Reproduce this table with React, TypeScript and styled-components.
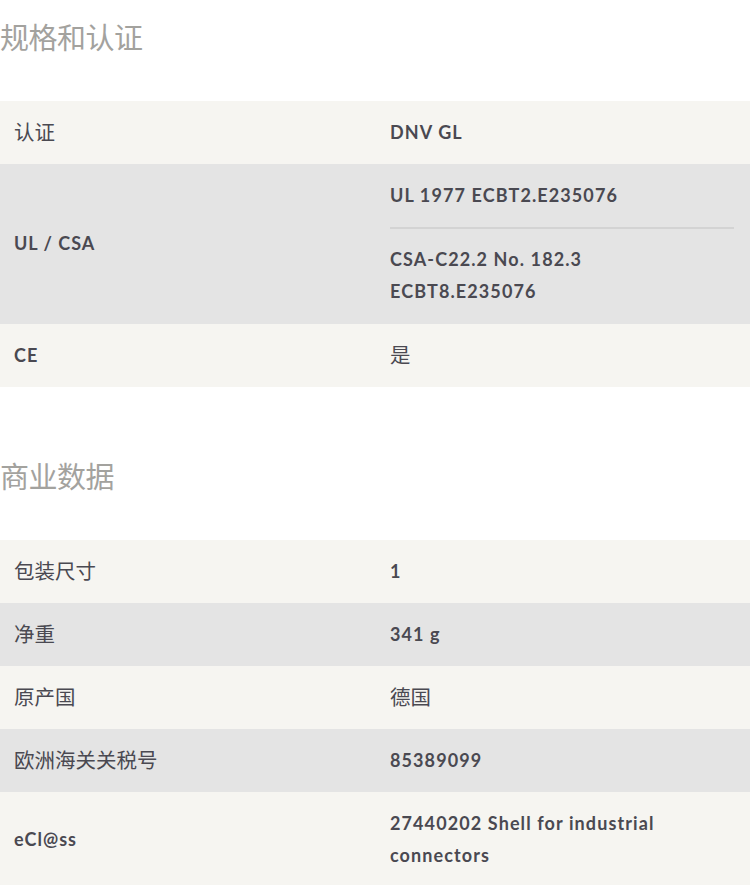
import React from "react";
import styled, { createGlobalStyle } from "styled-components";

const Global = createGlobalStyle`
  html, body { margin: 0; padding: 0; background: #ffffff; }
  body { font-family: Lato, "Noto Sans CJK SC", sans-serif; overflow: hidden; }
`;

const Page = styled.div`
  width: 750px;
  display: flex;
  flex-direction: column;
`;

const Section = styled.section`
  display: flex;
  flex-direction: column;
  margin-bottom: 52px;
  &:last-child {
    margin-bottom: 0;
  }
`;

const Heading = styled.h2`
  margin: 0 0 46px 0;
  padding-top: 17px;
  font-family: "Noto Sans CJK SC", sans-serif;
  font-weight: 400;
  font-size: 29px;
  line-height: 38px;
  color: #a3a29e;
  letter-spacing: -0.5px;
`;

const Table = styled.div`
  display: flex;
  flex-direction: column;
`;

const Row = styled.div<{ $alt: boolean }>`
  display: grid;
  grid-template-columns: 376px 374px;
  background: ${(p) => (p.$alt ? "#e4e4e4" : "#f6f5f1")};
  color: #4a4951;
`;

const Label = styled.div<{ $cjk?: boolean }>`
  display: flex;
  align-items: center;
  padding: ${(p) => (p.$cjk ? "13.5px 14px 17.5px" : "14.5px 14px 16.5px")};
  font-family: ${(p) => (p.$cjk ? '"Noto Sans CJK SC", sans-serif' : 'Lato, "Noto Sans CJK SC", sans-serif')};
  font-weight: ${(p) => (p.$cjk ? 400 : 700)};
  font-size: ${(p) => (p.$cjk ? "20.5px" : "18px")};
  letter-spacing: ${(p) => (p.$cjk ? "0" : "1px")};
  line-height: 32px;
`;

const ValueCell = styled.div`
  display: flex;
  flex-direction: column;
  padding: 0 16px 0 14px;
`;

const Value = styled.div<{ $cjk?: boolean }>`
  padding: ${(p) => (p.$cjk ? "13.5px 0 17.5px" : "14.5px 0 16.5px")};
  font-family: ${(p) => (p.$cjk ? '"Noto Sans CJK SC", sans-serif' : 'Lato, "Noto Sans CJK SC", sans-serif')};
  font-weight: ${(p) => (p.$cjk ? 400 : 700)};
  font-size: ${(p) => (p.$cjk ? "20.5px" : "18px")};
  letter-spacing: ${(p) => (p.$cjk ? "0" : "1.1px")};
  line-height: 32px;
  & + & {
    border-top: 2px solid #d3d3d3;
    padding-top: 13.5px;
    padding-bottom: 17.5px;
  }
`;

type Item = { label: string; values: string[] };

const isCjk = (s: string) => /[\u4e00-\u9fff]/.test(s);

const sections: { title: string; items: Item[] }[] = [
  {
    title: "规格和认证",
    items: [
      { label: "认证", values: ["DNV GL"] },
      { label: "UL / CSA", values: ["UL 1977 ECBT2.E235076", "CSA-C22.2 No. 182.3\nECBT8.E235076"] },
      { label: "CE", values: ["是"] },
    ],
  },
  {
    title: "商业数据",
    items: [
      { label: "包装尺寸", values: ["1"] },
      { label: "净重", values: ["341 g"] },
      { label: "原产国", values: ["德国"] },
      { label: "欧洲海关关税号", values: ["85389099"] },
      { label: "eCl@ss", values: ["27440202 Shell for industrial connectors"] },
    ],
  },
];

export default function App() {
  return (
    <Page>
      <Global />
      {sections.map((s) => (
        <Section key={s.title}>
          <Heading>{s.title}</Heading>
          <Table>
            {s.items.map((it, i) => (
              <Row key={it.label} $alt={i % 2 === 1}>
                <Label $cjk={isCjk(it.label)}>{it.label}</Label>
                <ValueCell>
                  {it.values.map((v) => (
                    <Value key={v} $cjk={isCjk(v)}>
                      {v.split("\n").map((line, k) => (
                        <div key={k}>{line}</div>
                      ))}
                    </Value>
                  ))}
                </ValueCell>
              </Row>
            ))}
          </Table>
        </Section>
      ))}
    </Page>
  );
}
